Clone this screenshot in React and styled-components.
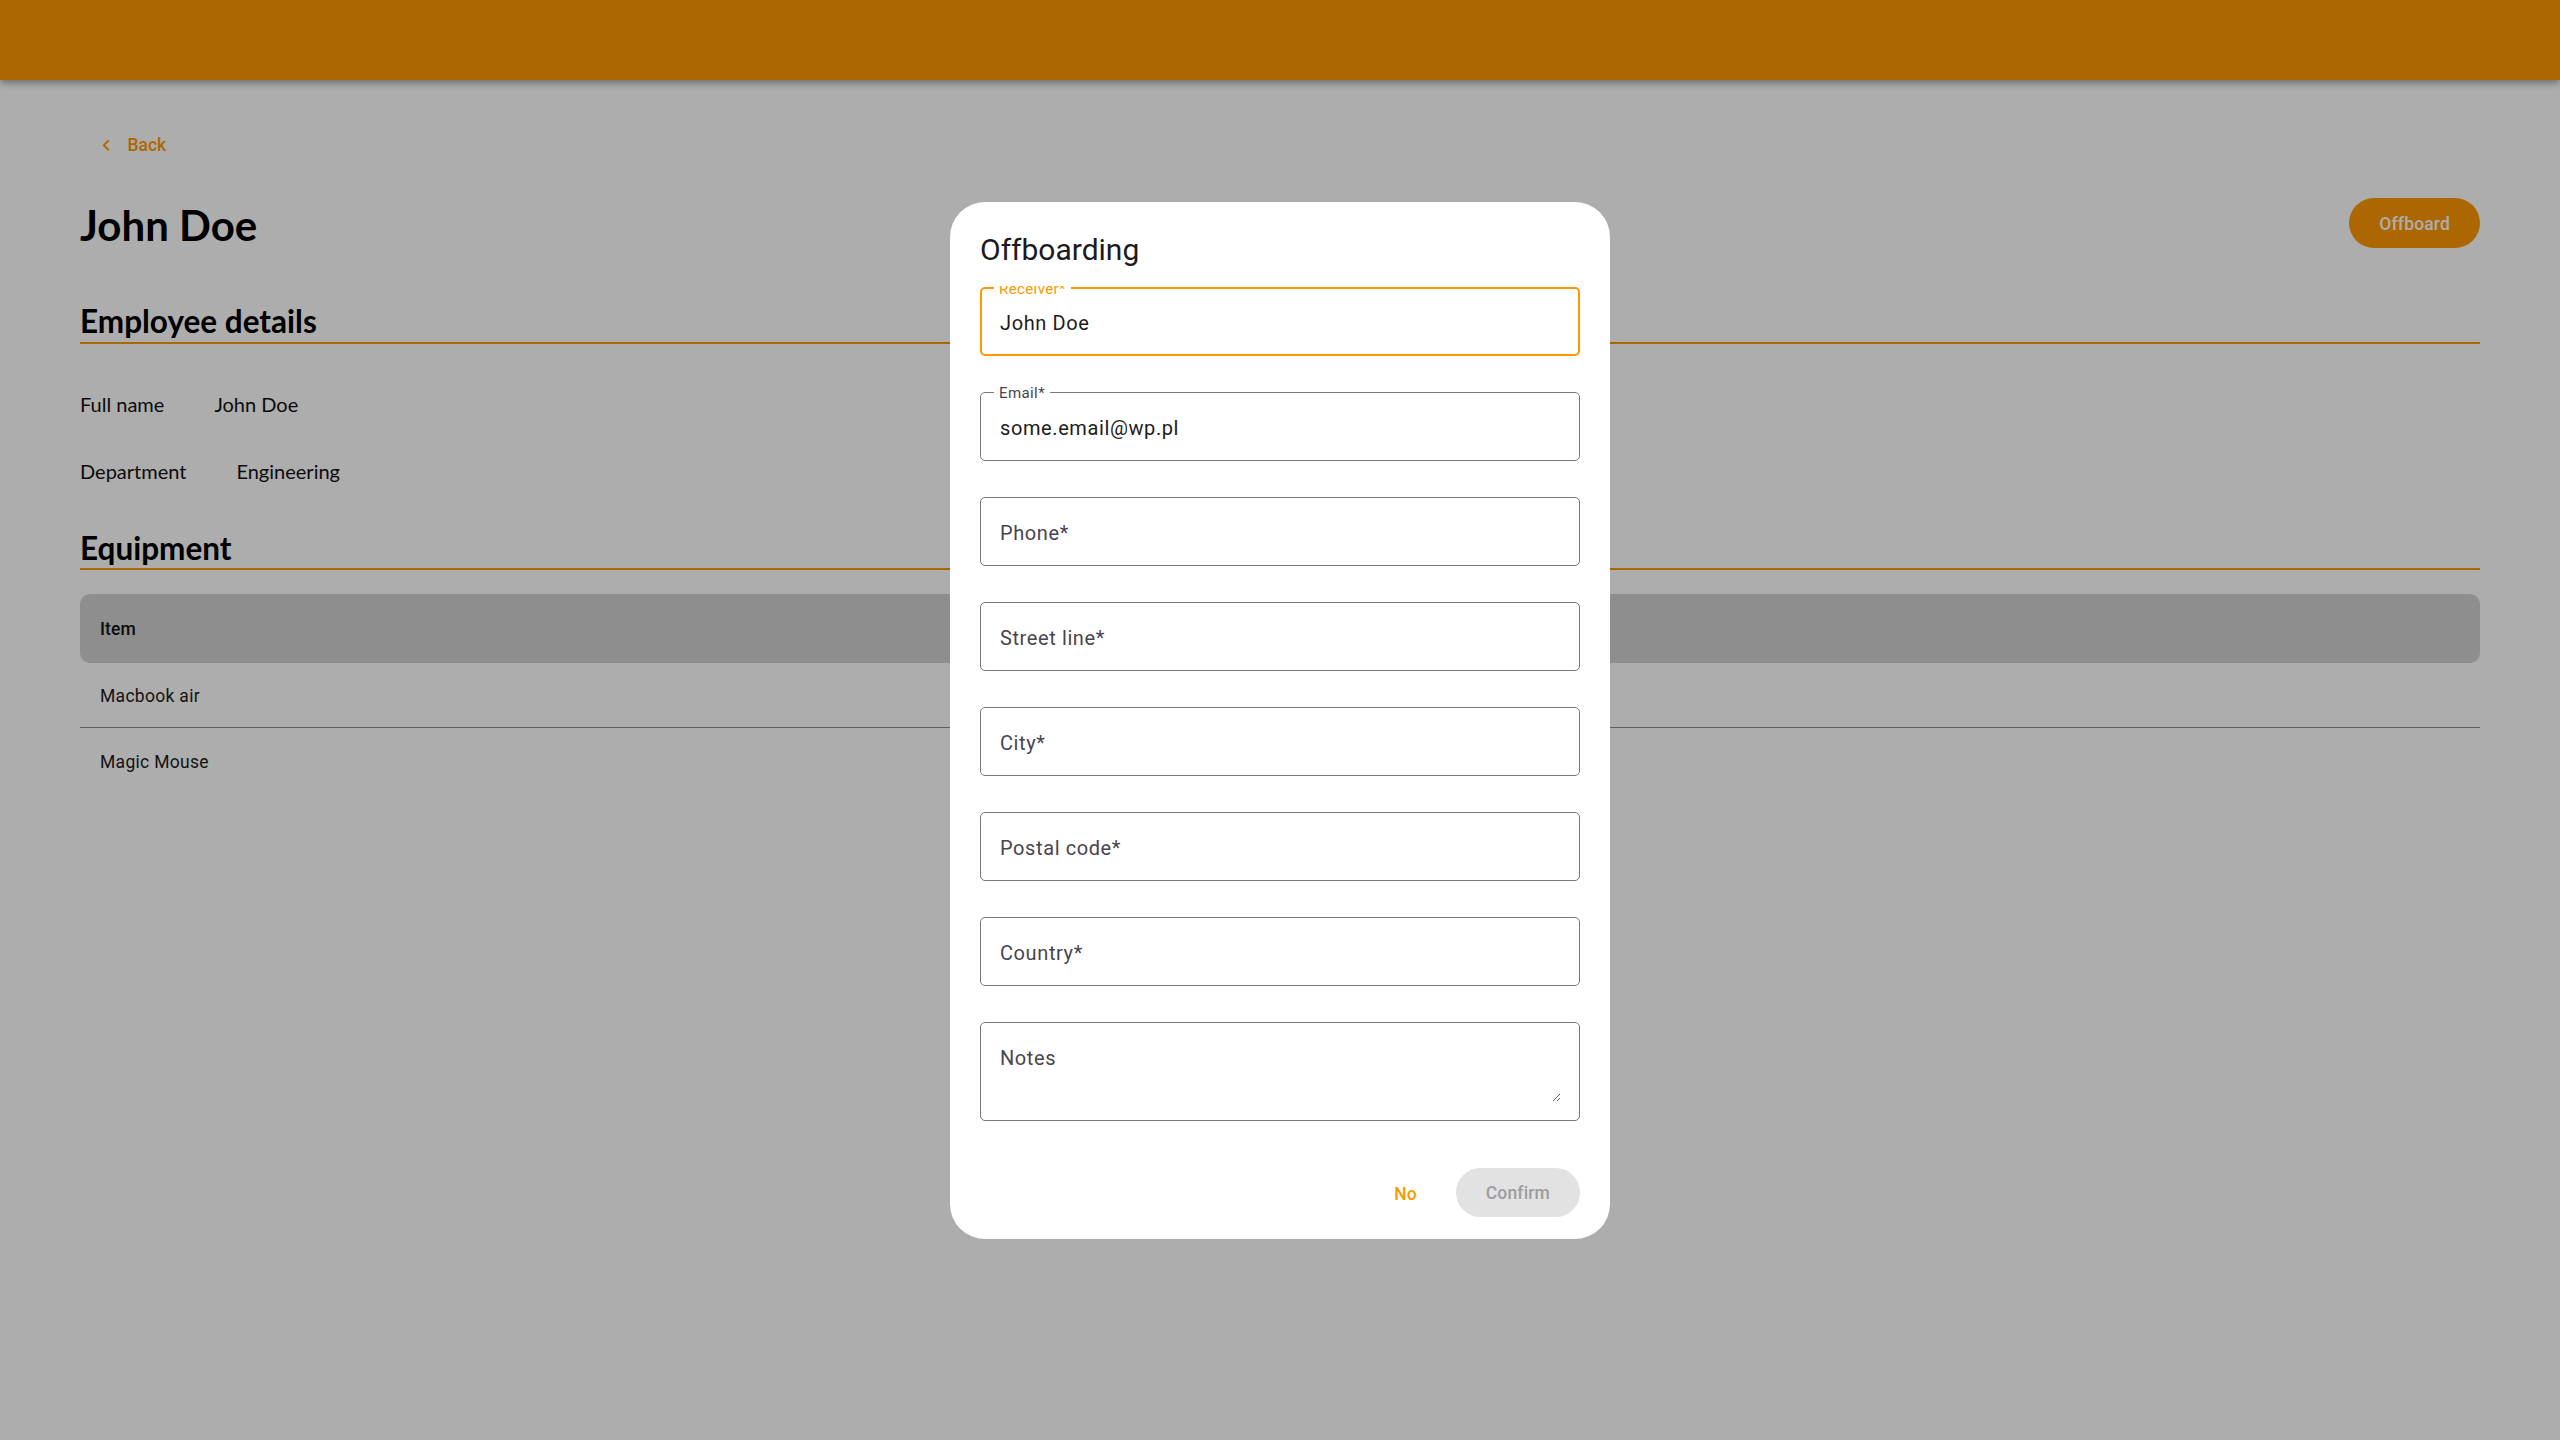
import React from "react";
import styled, { createGlobalStyle, css } from "styled-components";

const ORANGE = "#ff9800";

const GlobalStyle = createGlobalStyle`
  html, body { margin: 0; padding: 0; }
  body {
    background: #ffffff;
    font-family: Lato, "Noto Sans", Arial, sans-serif;
    color: #111111;
  }
  * { box-sizing: border-box; }
`;

const Page = styled.div`
  min-height: 100vh;
  background: #ffffff;
`;

const TopBar = styled.header`
  height: 80px;
  background: ${ORANGE};
  box-shadow: 0 2px 5px -1px rgba(0, 0, 0, 0.2), 0 5px 6px 0 rgba(0, 0, 0, 0.14),
    0 1px 12px 0 rgba(0, 0, 0, 0.12);
  position: relative;
  z-index: 1;
`;

const Main = styled.main`
  padding: 53px 80px 0;
  display: flex;
  flex-direction: column;
`;

const BackLink = styled.a`
  align-self: flex-start;
  display: flex;
  align-items: center;
  gap: 10px;
  height: 24px;
  margin-left: 15px;
  color: ${ORANGE};
  font-family: Roboto, sans-serif;
  font-weight: 500;
  font-size: 17.5px;
  line-height: 24px;
  text-decoration: none;
  svg { width: 22.5px; height: 22.5px; fill: currentColor; }
`;

const TitleRow = styled.div`
  margin-top: 41px;
  height: 50px;
  display: flex;
  align-items: center;
  justify-content: space-between;
`;

const PageTitle = styled.h1`
  margin: 4px 0 0;
  font-family: Lato, sans-serif;
  font-weight: 700;
  font-size: 42px;
  line-height: 50px;
  color: #000;
`;

const PillButton = styled.button`
  height: 50px;
  padding: 0 30px;
  border: none;
  border-radius: 25px;
  font-family: Roboto, sans-serif;
  font-weight: 500;
  font-size: 17.5px;
  letter-spacing: 0.15px;
  cursor: pointer;
  ${(p) =>
    p.$disabled
      ? css`
          background: #e2e2e3;
          color: #9d9c9f;
          height: 49px;
        `
      : css`
          background: ${ORANGE};
          color: #ffffff;
          padding-top: 2px;
        `}
`;

const SectionTitle = styled.h2`
  margin: ${(p) => p.$gap}px 0 0;
  font-family: Lato, sans-serif;
  font-weight: 700;
  font-size: 31.5px;
  line-height: 36px;
  padding-bottom: 2.5px;
  border-bottom: 2px solid ${ORANGE};
  color: #000;
`;

const DetailList = styled.dl`
  margin: 46px 0 0;
  display: flex;
  flex-direction: column;
  gap: 39px;
`;

const DetailRow = styled.div`
  display: flex;
  gap: 50px;
  font-family: Lato, sans-serif;
  font-size: 20px;
  line-height: 28px;
  color: #111;
`;

const DetailLabel = styled.dt`
  margin: 0;
`;

const DetailValue = styled.dd`
  margin: 0;
`;

const Table = styled.div`
  margin-top: 24px;
  display: flex;
  flex-direction: column;
  font-family: Roboto, sans-serif;
  font-size: 17.5px;
  letter-spacing: 0.3px;
  color: #1d1b20;
`;

const HeaderRow = styled.div`
  height: 69px;
  display: flex;
  align-items: center;
  padding: 1px 20px 0;
  background: #d1d1d1;
  border-radius: 10px;
  font-weight: 500;
  letter-spacing: 0.1px;
  color: #111;
`;

const BodyRow = styled.div`
  height: 65px;
  display: flex;
  align-items: center;
  padding: 2px 20px 0;
  border-bottom: ${(p) => (p.$last ? "none" : "1.5px solid #948a8d")};
`;

/* ---------- dialog ---------- */

const Backdrop = styled.div`
  position: fixed;
  inset: 0;
  z-index: 10;
  background: rgba(0, 0, 0, 0.32);
  display: flex;
  align-items: center;
  justify-content: center;
`;

const Dialog = styled.div`
  width: 660px;
  padding: 28px 30px 21px;
  background: #ffffff;
  border-radius: 35px;
  display: flex;
  flex-direction: column;
  font-family: Roboto, sans-serif;
`;

const DialogTitle = styled.h2`
  margin: 0;
  font-family: Roboto, sans-serif;
  font-weight: 400;
  font-size: 30px;
  line-height: 40px;
  color: #1d1b20;
`;

const DialogContent = styled.div`
  margin-top: 16px;
  padding-top: 1px;
  overflow: hidden;
  display: flex;
  flex-direction: column;
  gap: 36px;
`;

const Field = styled.div`
  position: relative;
  height: ${(p) => (p.$tall ? 99 : 69)}px;
  border: ${(p) => (p.$focused ? `2px solid ${ORANGE}` : "1px solid #7f767b")};
  border-radius: 5px;
  display: flex;
  flex-direction: ${(p) => (p.$tall ? "column" : "row")};
  align-items: ${(p) => (p.$tall ? "stretch" : "center")};
  padding: ${(p) =>
    p.$tall ? "23px 18px 18px 19px" : p.$focused ? "3px 18px 0" : "3px 19px 0"};
  font-size: 20px;
  line-height: 24px;
  letter-spacing: 0.6px;
`;

const FloatLabel = styled.span`
  position: absolute;
  top: -9px;
  left: ${(p) => (p.$focused ? 12 : 13)}px;
  padding: 0 5px;
  background: #ffffff;
  font-size: 15px;
  line-height: 18px;
  letter-spacing: 0.4px;
  color: ${(p) => (p.$focused ? ORANGE : "#49454f")};
`;

const FieldValue = styled.span`
  color: #1d1b20;
`;

const FieldPlaceholder = styled.span`
  color: #49454f;
`;

const NotesArea = styled.textarea`
  flex: 1;
  width: 100%;
  margin: 0;
  padding: 0;
  border: none;
  outline: none;
  resize: vertical;
  font: inherit;
  background: transparent;
`;

const Actions = styled.div`
  margin-top: 47px;
  display: flex;
  justify-content: flex-end;
  align-items: center;
  gap: 24px;
`;

const TextButton = styled.button`
  height: 50px;
  padding: 2px 15px 0;
  border: none;
  background: transparent;
  color: ${ORANGE};
  font-family: Roboto, sans-serif;
  font-weight: 500;
  font-size: 17.5px;
  letter-spacing: 0.15px;
  cursor: pointer;
`;

const ChevronLeft = () => (
  <svg viewBox="0 0 24 24" aria-hidden="true">
    <path d="M15.41 7.41 14 6l-6 6 6 6 1.41-1.41L10.83 12z" />
  </svg>
);

const fields = [
  { label: "Receiver*", value: "John Doe", focused: true },
  { label: "Email*", value: "some.email@wp.pl" },
  { placeholder: "Phone*" },
  { placeholder: "Street line*" },
  { placeholder: "City*" },
  { placeholder: "Postal code*" },
  { placeholder: "Country*" },
];

export default function App() {
  return (
    <>
      <GlobalStyle />
      <Page>
        <TopBar />
        <Main>
          <BackLink href="#">
            <ChevronLeft />
            Back
          </BackLink>
          <TitleRow>
            <PageTitle>John Doe</PageTitle>
            <PillButton>Offboard</PillButton>
          </TitleRow>
          <SectionTitle $gap={55}>Employee details</SectionTitle>
          <DetailList>
            <DetailRow>
              <DetailLabel>Full name</DetailLabel>
              <DetailValue>John Doe</DetailValue>
            </DetailRow>
            <DetailRow>
              <DetailLabel>Department</DetailLabel>
              <DetailValue>Engineering</DetailValue>
            </DetailRow>
          </DetailList>
          <SectionTitle $gap={45}>Equipment</SectionTitle>
          <Table>
            <HeaderRow>Item</HeaderRow>
            <BodyRow>Macbook air</BodyRow>
            <BodyRow $last>Magic Mouse</BodyRow>
          </Table>
        </Main>
      </Page>
      <Backdrop>
        <Dialog role="dialog">
          <DialogTitle>Offboarding</DialogTitle>
          <DialogContent>
            {fields.map((f, i) => (
              <Field key={i} $focused={f.focused}>
                {f.label && <FloatLabel $focused={f.focused}>{f.label}</FloatLabel>}
                {f.value ? (
                  <FieldValue>{f.value}</FieldValue>
                ) : (
                  <FieldPlaceholder>{f.placeholder}</FieldPlaceholder>
                )}
              </Field>
            ))}
            <Field $tall>
              <FieldPlaceholder>Notes</FieldPlaceholder>
              <NotesArea aria-label="Notes" />
            </Field>
          </DialogContent>
          <Actions>
            <TextButton>No</TextButton>
            <PillButton $disabled>Confirm</PillButton>
          </Actions>
        </Dialog>
      </Backdrop>
    </>
  );
}
